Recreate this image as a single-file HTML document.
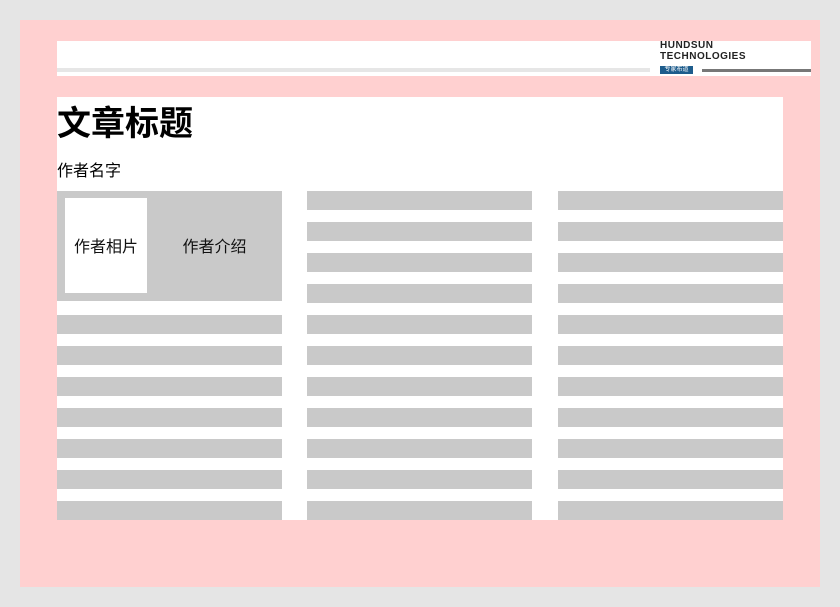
<!DOCTYPE html>
<html><head><meta charset="utf-8"><style>
*{margin:0;padding:0;box-sizing:border-box}
body{width:840px;height:607px;background:#e5e5e5;position:relative;overflow:hidden;font-family:"Liberation Sans","Noto Sans CJK SC",sans-serif}
.a{position:absolute}
.bar{position:absolute;height:19px;background:#c9c9c9;width:225px}
</style></head><body>
<div class="a" style="left:20px;top:20px;width:800px;height:567px;background:#ffd0d0"></div>
<div class="a" style="left:57px;top:41px;width:754px;height:35px;background:#fff"></div>
<div class="a" style="left:57px;top:68px;width:593px;height:4px;background:#e6e6e6"></div>
<div class="a" style="left:660px;top:41px;font-size:10px;font-weight:bold;line-height:10.5px;letter-spacing:0.5px;color:#222">HUNDSUN<br>TECHNOLOGIES</div>
<div class="a" style="left:660px;top:66px;width:33px;height:8px;background:#1d5c8c;color:#fff;font-size:6px;line-height:8px;text-align:center">专家布道</div>
<div class="a" style="left:702px;top:69px;width:109px;height:3px;background:#777"></div>
<div class="a" style="left:57px;top:97px;width:726px;height:423px;background:#fff"></div>
<div class="a" style="left:57px;top:102px;font-size:34px;font-weight:bold;line-height:44px;color:#000">文章标题</div>
<div class="a" style="left:57px;top:161px;font-size:16px;line-height:22px;color:#000">作者名字</div>
<div class="a" style="left:57px;top:191px;width:225px;height:110px;background:#c9c9c9"></div>
<div class="a" style="left:65px;top:198px;width:82px;height:95px;background:#fff;"></div>
<div class="a" style="left:65px;top:200px;width:82px;height:95px;font-size:16px;line-height:95px;text-align:center;color:#111">作者相片</div>
<div class="a" style="left:147px;top:200px;width:135px;height:95px;font-size:16px;line-height:95px;text-align:center;color:#111">作者介绍</div>
<div class="bar" style="left:57px;top:315px"></div>
<div class="bar" style="left:57px;top:346px"></div>
<div class="bar" style="left:57px;top:377px"></div>
<div class="bar" style="left:57px;top:408px"></div>
<div class="bar" style="left:57px;top:439px"></div>
<div class="bar" style="left:57px;top:470px"></div>
<div class="bar" style="left:57px;top:501px"></div>
<div class="bar" style="left:307px;top:191px"></div><div class="bar" style="left:558px;top:191px"></div>
<div class="bar" style="left:307px;top:222px"></div><div class="bar" style="left:558px;top:222px"></div>
<div class="bar" style="left:307px;top:253px"></div><div class="bar" style="left:558px;top:253px"></div>
<div class="bar" style="left:307px;top:284px"></div><div class="bar" style="left:558px;top:284px"></div>
<div class="bar" style="left:307px;top:315px"></div><div class="bar" style="left:558px;top:315px"></div>
<div class="bar" style="left:307px;top:346px"></div><div class="bar" style="left:558px;top:346px"></div>
<div class="bar" style="left:307px;top:377px"></div><div class="bar" style="left:558px;top:377px"></div>
<div class="bar" style="left:307px;top:408px"></div><div class="bar" style="left:558px;top:408px"></div>
<div class="bar" style="left:307px;top:439px"></div><div class="bar" style="left:558px;top:439px"></div>
<div class="bar" style="left:307px;top:470px"></div><div class="bar" style="left:558px;top:470px"></div>
<div class="bar" style="left:307px;top:501px"></div><div class="bar" style="left:558px;top:501px"></div>
</body></html>
